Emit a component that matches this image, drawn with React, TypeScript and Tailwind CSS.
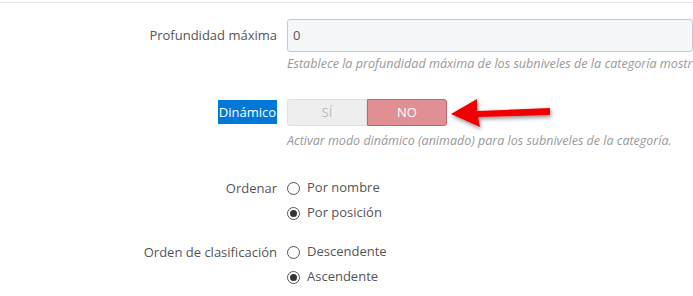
const LABEL = "w-[277px] shrink-0 text-right text-[13px] text-[#555]";

function Radio({ checked, label }: { checked?: boolean; label: string }) {
  return (
    <label className="flex h-[25px] items-center gap-[7px] text-[13px] text-[#555]">
      <span className="flex h-[13px] w-[13px] items-center justify-center rounded-full border border-[#555] bg-white">
        {checked && <span className="h-[7px] w-[7px] rounded-full bg-[#333]" />}
      </span>
      {label}
    </label>
  );
}

function Arrow() {
  return (
    <svg
      className="pointer-events-none absolute left-[446px] top-[94px]"
      width="112"
      height="40"
      viewBox="0 0 112 40"
    >
      <defs>
        <filter id="sh" x="-20%" y="-40%" width="140%" height="180%">
          <feDropShadow dx="1" dy="2" stdDeviation="2" floodColor="#000" floodOpacity="0.45" />
        </filter>
      </defs>
      <polygon
        points="5,20 31,5 31,17 104,14 104,21 32,23 34,33"
        fill="#f00000"
        filter="url(#sh)"
      />
    </svg>
  );
}

export default function App() {
  return (
    <div
      className="relative h-[296px] w-[693px] overflow-hidden bg-white"
      style={{ fontFamily: '"Open Sans", sans-serif' }}
    >
      <div className="h-[3px] border-b border-[#e3e3e3]" />

      <div className="mt-[16px] flex items-center gap-[10px]">
        <div className={LABEL}>Profundidad máxima</div>
        <div className="flex h-[33px] w-[420px] items-center rounded-[3px] border border-[#bbcdd2] bg-[#f5f8f9] px-[5px] text-[13px] text-[#555]">
          0
        </div>
      </div>
      <p className="ml-[287px] mt-[3px] w-[406px] overflow-hidden whitespace-nowrap text-[12.6px] italic text-[#999]">
        Establece la profundidad máxima de los subniveles de la categoría mostr
      </p>

      <div className="mt-[25px] flex items-center gap-[10px]">
        <div className={LABEL}>
          <span className="bg-[#0078d7] px-[1px] py-[3px] text-white">Dinámico</span>
        </div>
        <div className="flex h-[27px] w-[160px] text-[13px]">
          <div className="flex flex-1 items-center justify-center rounded-l-[3px] border border-[#e0e0e0] bg-[#eeeeee] text-[#bbb]">
            SÍ
          </div>
          <div className="flex flex-1 items-center justify-center rounded-r-[3px] border border-[#c7636b] bg-[#e08f95] text-white">
            NO
          </div>
        </div>
      </div>
      <p className="ml-[287px] mt-[6px] whitespace-nowrap text-[12.5px] italic text-[#999]">
        Activar modo dinámico (animado) para los subniveles de la categoría.
      </p>

      <div className="mt-[25px] flex items-start gap-[10px]">
        <div className={`${LABEL} leading-[25px]`}>Ordenar</div>
        <div className="flex flex-col">
          <Radio label="Por nombre" />
          <Radio label="Por posición" checked />
        </div>
      </div>

      <div className="mt-[14px] flex items-start gap-[10px]">
        <div className={`${LABEL} leading-[25px]`}>Orden de clasificación</div>
        <div className="flex flex-col">
          <Radio label="Descendente" />
          <Radio label="Ascendente" checked />
        </div>
      </div>

      <Arrow />
    </div>
  );
}
